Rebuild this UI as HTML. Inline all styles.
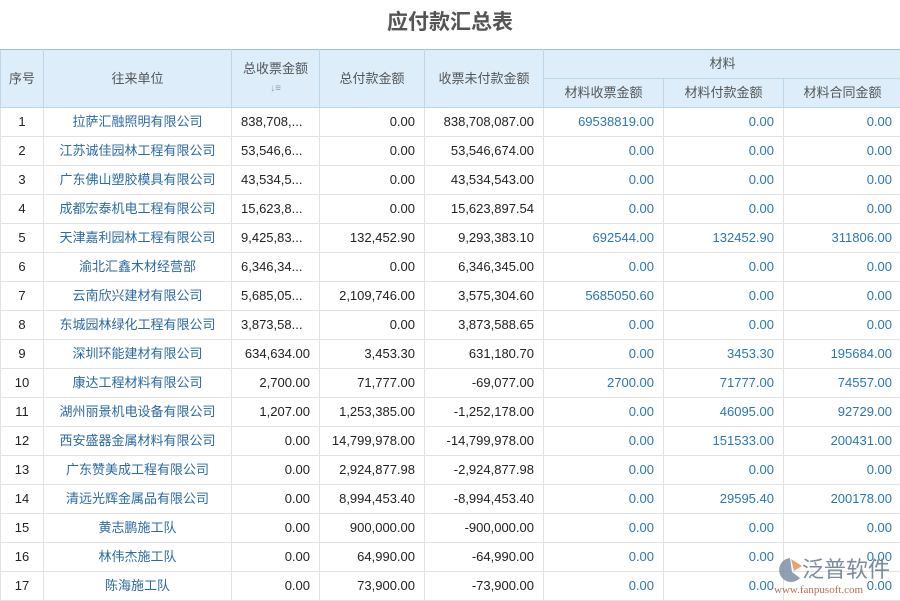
<!DOCTYPE html>
<html><head><meta charset="utf-8"><style>
body{margin:0;width:900px;height:600px;overflow:hidden;background:#fff;font-family:"Liberation Sans","Noto Sans CJK SC",sans-serif;}
h1{margin:0;height:49px;line-height:46px;text-align:center;font-size:21px;color:#555;font-weight:bold;}
table{border-collapse:collapse;table-layout:fixed;width:901px;font-size:13px;}
th{background:#ddeefa;color:#555;font-weight:normal;border:1px solid #bcd6ea;height:28px;padding:0;line-height:16px;}
thead tr:first-child th{border-top:1px solid #9cc0dc;}
td{border:1px solid #e2e2e2;height:28px;line-height:16px;padding:0 9px;color:#222;text-align:right;white-space:nowrap;overflow:hidden;}
td.c{text-align:center;padding:0;}
td.n{color:#2b6aa3;}
td.b{color:#2a76b4;}
.logo{position:absolute;left:770px;top:552px;width:130px;height:48px;white-space:nowrap;}
</style></head><body>
<h1>应付款汇总表</h1>
<table>
<colgroup><col style="width:43px"><col style="width:188px"><col style="width:88px"><col style="width:105px"><col style="width:119px"><col style="width:120px"><col style="width:120px"><col style="width:118px"></colgroup>
<thead>
<tr><th rowspan="2">序号</th><th rowspan="2">往来单位</th><th rowspan="2" style="line-height:18px">总收票金额<br><span style="font-size:10px;color:#99a">↓≡</span></th><th rowspan="2">总付款金额</th><th rowspan="2">收票未付款金额</th><th colspan="3">材料</th></tr>
<tr><th>材料收票金额</th><th>材料付款金额</th><th>材料合同金额</th></tr>
</thead>
<tbody>
<tr><td class="c">1</td><td class="c n">拉萨汇融照明有限公司</td><td style="text-align:left">838,708,...</td><td>0.00</td><td>838,708,087.00</td><td class="b">69538819.00</td><td class="b">0.00</td><td class="b">0.00</td></tr>
<tr><td class="c">2</td><td class="c n">江苏诚佳园林工程有限公司</td><td style="text-align:left">53,546,6...</td><td>0.00</td><td>53,546,674.00</td><td class="b">0.00</td><td class="b">0.00</td><td class="b">0.00</td></tr>
<tr><td class="c">3</td><td class="c n">广东佛山塑胶模具有限公司</td><td style="text-align:left">43,534,5...</td><td>0.00</td><td>43,534,543.00</td><td class="b">0.00</td><td class="b">0.00</td><td class="b">0.00</td></tr>
<tr><td class="c">4</td><td class="c n">成都宏泰机电工程有限公司</td><td style="text-align:left">15,623,8...</td><td>0.00</td><td>15,623,897.54</td><td class="b">0.00</td><td class="b">0.00</td><td class="b">0.00</td></tr>
<tr><td class="c">5</td><td class="c n">天津嘉利园林工程有限公司</td><td style="text-align:left">9,425,83...</td><td>132,452.90</td><td>9,293,383.10</td><td class="b">692544.00</td><td class="b">132452.90</td><td class="b">311806.00</td></tr>
<tr><td class="c">6</td><td class="c n">渝北汇鑫木材经营部</td><td style="text-align:left">6,346,34...</td><td>0.00</td><td>6,346,345.00</td><td class="b">0.00</td><td class="b">0.00</td><td class="b">0.00</td></tr>
<tr><td class="c">7</td><td class="c n">云南欣兴建材有限公司</td><td style="text-align:left">5,685,05...</td><td>2,109,746.00</td><td>3,575,304.60</td><td class="b">5685050.60</td><td class="b">0.00</td><td class="b">0.00</td></tr>
<tr><td class="c">8</td><td class="c n">东城园林绿化工程有限公司</td><td style="text-align:left">3,873,58...</td><td>0.00</td><td>3,873,588.65</td><td class="b">0.00</td><td class="b">0.00</td><td class="b">0.00</td></tr>
<tr><td class="c">9</td><td class="c n">深圳环能建材有限公司</td><td>634,634.00</td><td>3,453.30</td><td>631,180.70</td><td class="b">0.00</td><td class="b">3453.30</td><td class="b">195684.00</td></tr>
<tr><td class="c">10</td><td class="c n">康达工程材料有限公司</td><td>2,700.00</td><td>71,777.00</td><td>-69,077.00</td><td class="b">2700.00</td><td class="b">71777.00</td><td class="b">74557.00</td></tr>
<tr><td class="c">11</td><td class="c n">湖州丽景机电设备有限公司</td><td>1,207.00</td><td>1,253,385.00</td><td>-1,252,178.00</td><td class="b">0.00</td><td class="b">46095.00</td><td class="b">92729.00</td></tr>
<tr><td class="c">12</td><td class="c n">西安盛器金属材料有限公司</td><td>0.00</td><td>14,799,978.00</td><td>-14,799,978.00</td><td class="b">0.00</td><td class="b">151533.00</td><td class="b">200431.00</td></tr>
<tr><td class="c">13</td><td class="c n">广东赞美成工程有限公司</td><td>0.00</td><td>2,924,877.98</td><td>-2,924,877.98</td><td class="b">0.00</td><td class="b">0.00</td><td class="b">0.00</td></tr>
<tr><td class="c">14</td><td class="c n">清远光辉金属品有限公司</td><td>0.00</td><td>8,994,453.40</td><td>-8,994,453.40</td><td class="b">0.00</td><td class="b">29595.40</td><td class="b">200178.00</td></tr>
<tr><td class="c">15</td><td class="c n">黄志鹏施工队</td><td>0.00</td><td>900,000.00</td><td>-900,000.00</td><td class="b">0.00</td><td class="b">0.00</td><td class="b">0.00</td></tr>
<tr><td class="c">16</td><td class="c n">林伟杰施工队</td><td>0.00</td><td>64,990.00</td><td>-64,990.00</td><td class="b">0.00</td><td class="b">0.00</td><td class="b">0.00</td></tr>
<tr><td class="c">17</td><td class="c n">陈海施工队</td><td>0.00</td><td>73,900.00</td><td>-73,900.00</td><td class="b">0.00</td><td class="b">0.00</td><td class="b">0.00</td></tr>
</tbody></table>
<div class="logo">
<svg width="30" height="28" style="position:absolute;left:4px;top:4px" viewBox="0 0 30 28"><path d="M16 2 A12 12 0 1 0 26 22 L18 16 Z" fill="#7c8fa6" opacity="0.85"/><path d="M17 3 L28 10 L20 15 Z" fill="#e8915a" opacity="0.85"/></svg>
<div style="position:absolute;left:32px;top:2px;font-size:22px;line-height:28px;color:#6c7f96;opacity:.9;font-family:'Noto Sans CJK SC',sans-serif">泛普软件</div>
<div style="position:absolute;left:4px;top:32px;font-size:11px;line-height:12px;color:#b0623a;font-family:'Liberation Serif',serif;opacity:.9">www.fanpusoft.com</div>
</div>
</body></html>
